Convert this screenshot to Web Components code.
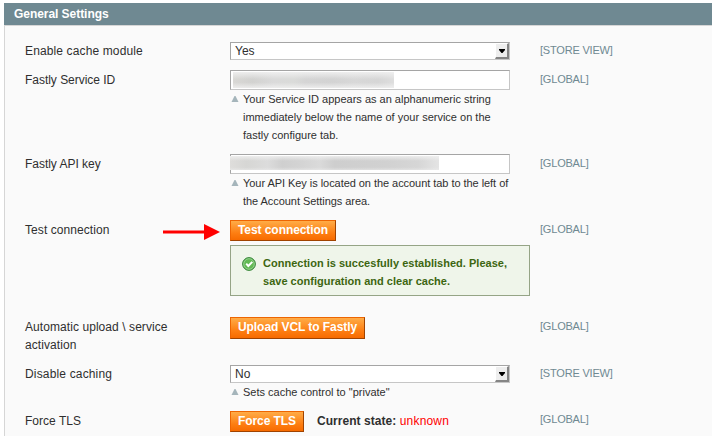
<!DOCTYPE html>
<html lang="en"><head><meta charset="utf-8"><title>General Settings</title>
<style>
html,body{margin:0;height:436px;overflow:hidden;background:#fff}
body{font:12px/18px "Liberation Sans",Arial,sans-serif;color:#2f2f2f}
</style></head><body>
<settings-panel heading="General Settings">
<setting-row h="29" label="Enable cache module" scope="[STORE VIEW]"><select-box>Yes</select-box></setting-row>
<setting-row h="84" label="Fastly Service ID" tracking="-.03" scope="[GLOBAL]"><masked-input kind="id"></masked-input><field-note>Your Service ID appears as an alphanumeric string<br>immediately below the name of your service on the<br>fastly configure tab.</field-note></setting-row>
<setting-row h="66" label="Fastly API key" tracking="-.03" scope="[GLOBAL]"><masked-input kind="key"></masked-input><field-note tracking="-.05">Your API Key is located on the account tab to the left of<br>the Account Settings area.</field-note></setting-row>
<setting-row h="97" label="Test connection" tracking=".07" scope="[GLOBAL]"><action-button w="106" h="21">Test connection</action-button><success-message>Connection is succesfully established. Please,<br>save configuration and clear cache.</success-message><pointer-arrow></pointer-arrow></setting-row>
<setting-row h="47" label="Automatic upload \ service activation" tracking=".07" scope="[GLOBAL]"><action-button w="135" h="22">Upload VCL to Fastly</action-button></setting-row>
<setting-row h="47" label="Disable caching" tracking=".16" scope="[STORE VIEW]"><select-box>No</select-box><field-note>Sets cache control to "private"</field-note></setting-row>
<setting-row h="25" label="Force TLS" tracking=".03" scope="[GLOBAL]"><state-line><action-button w="74" h="21">Force TLS</action-button><state-text>unknown</state-text></state-line></setting-row>
</settings-panel>
<script>
const define = (name, render) => customElements.define(name, class extends HTMLElement {
  connectedCallback() {
    if (!this.shadowRoot) this.attachShadow({mode: "open"}).innerHTML = render(this);
  }
});
define("settings-panel", e => `<style>
:host{display:block;padding:3px 0 0 4px}
header{height:22px;background:#6f8992;color:#fff;font-weight:bold;line-height:22px;padding-left:10px;letter-spacing:-.05px}
section{height:395px;border:solid #d6d6d6;border-width:1px 0 0 1px;background:#fafafa;padding:15px 0 0 20px}
</style><header>${e.getAttribute("heading")}</header><section><slot></slot></section>`);
define("setting-row", e => `<style>
:host{display:grid;grid-template-columns:205px 310px 1fr;height:${e.getAttribute("h")}px;position:relative}
label{display:block;padding:1px 30px 0 0;letter-spacing:${e.getAttribute("tracking") || .13}px}
aside{color:#6f8992;font-size:11px;letter-spacing:-.2px}
:host(:last-of-type) aside{margin-top:-1px}
</style><label>${e.getAttribute("label")}</label><div><slot></slot></div><aside>${e.getAttribute("scope")}</aside>`);
define("select-box", e => `<style>
:host{display:flex;justify-content:space-between;box-sizing:border-box;width:280px;height:18px;margin-top:1px;border:1px solid;border-color:#a5a5a5 #c6c6c6 #c6c6c6 #a5a5a5;background:#fff;line-height:16px;padding-left:4px}
i{box-sizing:border-box;width:14px;height:16px;background:#eee;border:solid;border-width:1px 2px 2px 1px;border-color:#fff #858585 #858585 #fff}
svg{display:block}
</style><span><slot></slot></span><i><svg width="11" height="13"><path d="M3 5H9V6L6.5 9H5.5L3 6Z"/></svg></i>`);
define("masked-input", e => { const key = e.getAttribute("kind") === "key"; return `<style>
:host{display:block;box-sizing:border-box;width:280px;height:20px;border:1px solid;border-color:#a5a5a5 #c6c6c6 #c6c6c6 #a5a5a5;background:#fff;padding:1px 0 0 ${key ? 0 : 2}px}
div{width:${key ? 209 : 161}px;height:${key ? 14 : 16}px;margin-left:${key ? -1 : 0}px;background:${key
  ? "linear-gradient(#f2f2f2cc,#eee0 35% 80%,#eee8),linear-gradient(90deg,#dedddb,#d6d6d4 8%,#dcdcdc 18%,#cfcfcf 25%,#d3d3d3 33%,#dadada 43%,#cecece 50%,#d1d1d1 75%,#d6d6d6 90%,#e4e4e4)"
  : "linear-gradient(#f2f2f2dd,#eee0 45% 65%,#f2f2f2cc),linear-gradient(90deg,#d9d8d5,#d2d2d0 12%,#dadada 25%,#dadbd9 38%,#d5d5d5 45%,#d3d3d3 62%,#d8d8d8 75%,#d6d6d6 90%,#dedede)"}}
</style><div></div>`; });
define("field-note", e => `<style>
:host{display:flex;font-size:11px;letter-spacing:${e.getAttribute("tracking") || 0}px;white-space:nowrap}
svg{flex:none;width:13px;height:18px}
</style><svg viewBox="0 0 13 18"><path fill="#a5b5bb" d="M4.5 6H5.5L8.5 12H1.5Z"/></svg><span><slot></slot></span>`);
define("action-button", e => `<style>
:host{display:block;box-sizing:border-box;width:${e.getAttribute("w")}px;height:${e.getAttribute("h")}px;border:1px solid;border-color:#ed6502 #a04300 #a04300 #ed6502;background:linear-gradient(#ffac47,#fd7d11 65%,#f76b00);color:#fff;font-weight:bold;line-height:18px;padding-left:7px;white-space:nowrap;letter-spacing:-.07px}
</style><slot></slot>`);
define("success-message", e => `<style>
:host{display:flex;box-sizing:border-box;width:300px;height:51px;margin-top:4px;border:1px solid #95a486;background:#eff5ea;padding:8px 0 0 11px;gap:7px;color:#3d6611;font-size:11px;font-weight:bold;white-space:nowrap;letter-spacing:.015px}
svg{flex:none;margin-top:3px}
</style><svg width="14" height="14"><circle cx="7" cy="7" r="6.4" fill="#4fa84c" stroke="#3b873b"/><circle cx="7" cy="7" r="5.3" fill="#62b954" stroke="#a6dba0" stroke-width=".8"/><path d="M4.2 6.7L6.3 9L10.3 4.9" fill="none" stroke="#fff" stroke-width="2"/></svg><span><slot></slot></span>`);
define("pointer-arrow", e => `<style>
:host{position:absolute;left:138px;top:3px;width:58px;height:18px}svg{display:block}
</style><svg width="58" height="18"><path fill="red" d="M0 7.5H41V1L57 9L41 17V10.5H0Z"/></svg>`);
define("state-line", e => `<style>:host{display:flex;gap:13px}</style><slot></slot>`);
define("state-text", e => `<style>:host{display:block;padding-top:1px;color:#f00;letter-spacing:.18px}b{color:#2f2f2f;letter-spacing:.04px}</style><b>Current state:</b> <slot></slot>`);
</script></body></html>
